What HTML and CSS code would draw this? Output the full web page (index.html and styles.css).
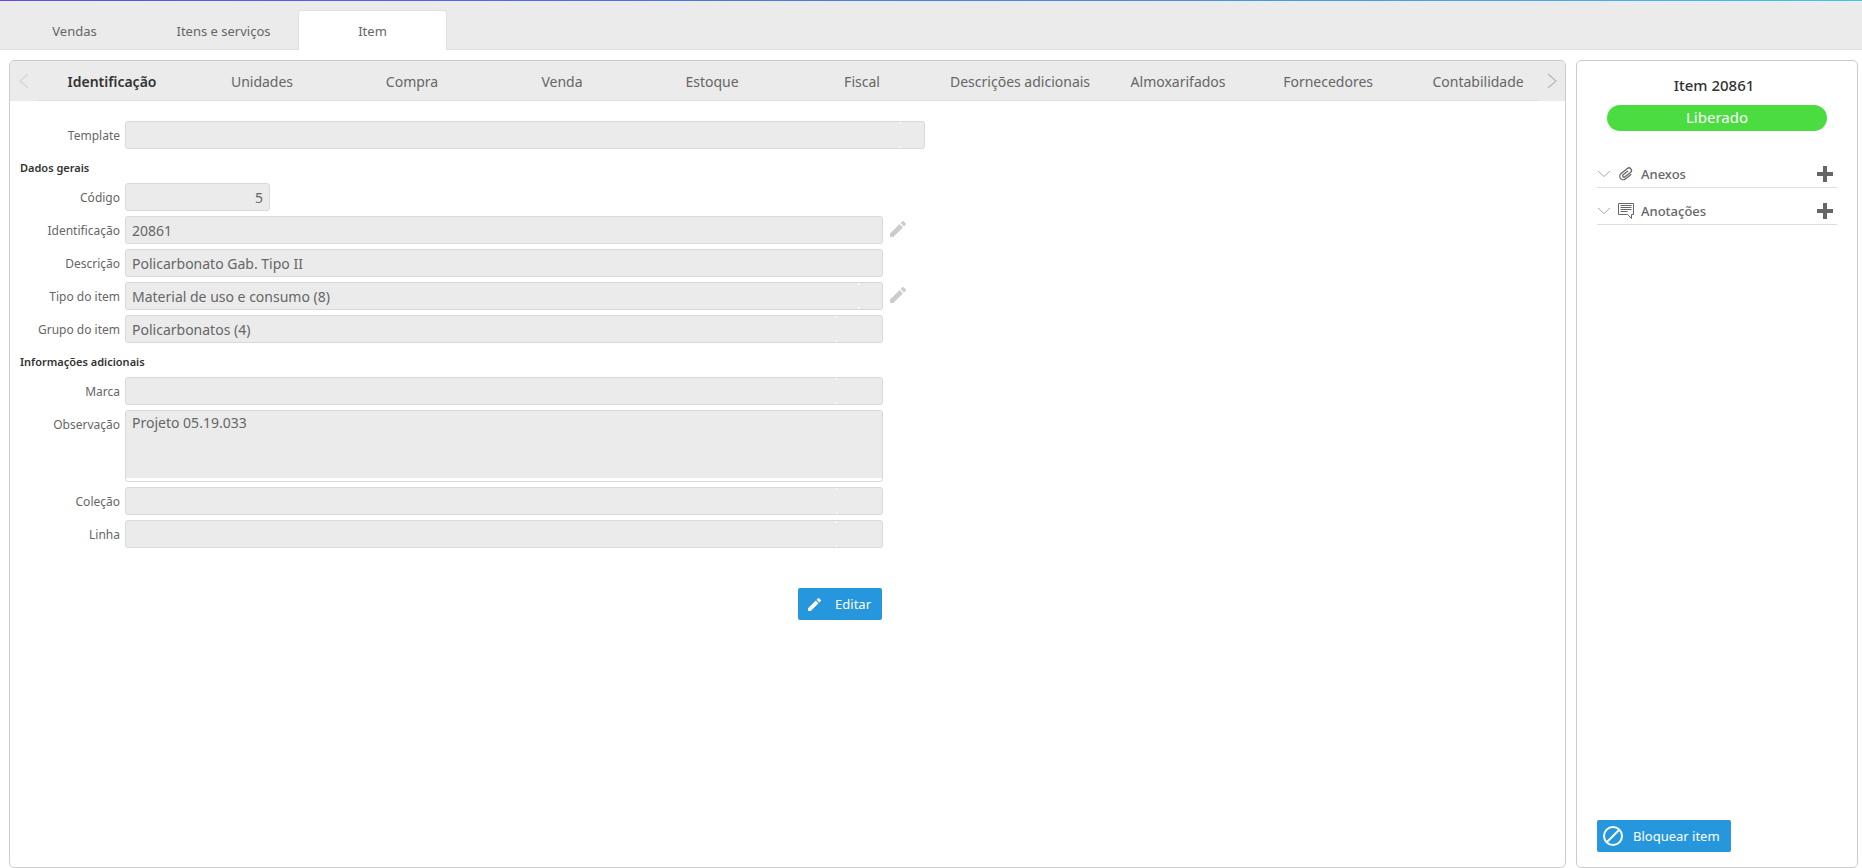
FILE: index.html
```html
<!DOCTYPE html>
<html lang="pt-BR">
<head>
<meta charset="utf-8">
<title>Item 20861</title>
<link rel="stylesheet" href="styles.css">
</head>
<body>
<svg class="symbols" aria-hidden="true">
  <symbol id="pencil" viewBox="0 0 18 18"><path d="M0 14.2V18h3.8L14.6 7.2l-3.800-3.800zM17.700 4.100a1 1 0 0 0 0-1.400L15.300.3a1 1 0 0 0-1.400 0L11.900 2.300l3.800 3.800z"/></symbol>
  <symbol id="chevron" viewBox="0 0 14 8"><path d="M1 1l6 5.500L13 1" fill="none" stroke="currentColor"/></symbol>
  <symbol id="plus" viewBox="0 0 16 16"><path d="M6 0h4v6h6v4h-6v6H6v-6H0V6h6z"/></symbol>
</svg>
<header class="topbar">
  <nav class="pages">
    <button class="page">Vendas</button>
    <button class="page">Itens e serviços</button>
    <button class="page page-active">Item</button>
  </nav>
</header>
<div class="workspace">
  <main class="panel main-panel">
    <div class="sections">
      <button class="arrow arrow-off" aria-label="Anterior"><svg class="line" width="10" height="16" viewBox="0 0 10 16"><path d="M9 1L1 8l8 7"/></svg></button>
      <nav class="section-list">
        <button class="section section-active">Identificação</button>
        <button class="section">Unidades</button>
        <button class="section">Compra</button>
        <button class="section">Venda</button>
        <button class="section">Estoque</button>
        <button class="section">Fiscal</button>
        <button class="section">Descrições adicionais</button>
        <button class="section">Almoxarifados</button>
        <button class="section">Fornecedores</button>
        <button class="section">Contabilidade</button>
      </nav>
      <button class="arrow" aria-label="Próximo"><svg class="line" width="10" height="16" viewBox="0 0 10 16"><path d="M1 1l8 7-8 7"/></svg></button>
    </div>
    <form class="form">
      <div class="row"><label class="label" for="template">Template</label><input class="field field-full split" id="template" readonly></div>
      <h2 class="heading">Dados gerais</h2>
      <div class="row"><label class="label" for="codigo">Código</label><input class="field field-short" id="codigo" value="5" readonly></div>
      <div class="row"><label class="label" for="ident">Identificação</label><input class="field" id="ident" value="20861" readonly><button type="button" class="edit" aria-label="Editar identificação"><svg width="16" height="16"><use href="#pencil"/></svg></button></div>
      <div class="row"><label class="label" for="descricao">Descrição</label><input class="field" id="descricao" value="Policarbonato Gab. Tipo II" readonly></div>
      <div class="row"><label class="label" for="tipo">Tipo do item</label><input class="field split" id="tipo" value="Material de uso e consumo (8)" readonly><button type="button" class="edit" aria-label="Editar tipo do item"><svg width="16" height="16"><use href="#pencil"/></svg></button></div>
      <div class="row"><label class="label" for="grupo">Grupo do item</label><input class="field split split-wide" id="grupo" value="Policarbonatos (4)" readonly></div>
      <h2 class="heading">Informações adicionais</h2>
      <div class="row"><label class="label" for="marca">Marca</label><input class="field split split-wide" id="marca" readonly></div>
      <div class="row"><label class="label" for="obs">Observação</label><textarea class="field notes" id="obs" readonly>Projeto 05.19.033</textarea></div>
      <div class="row"><label class="label" for="colecao">Coleção</label><input class="field split split-wide" id="colecao" readonly></div>
      <div class="row"><label class="label" for="linha">Linha</label><input class="field split split-wide" id="linha" readonly></div>
      <div class="actions"><button type="button" class="action"><svg width="13" height="13"><use href="#pencil"/></svg>Editar</button></div>
    </form>
  </main>
  <aside class="panel side-panel">
    <h1 class="title">Item 20861</h1>
    <div class="status">Liberado</div>
    <div class="group">
      <button class="group-name"><svg class="chevron" width="14" height="8"><use href="#chevron"/></svg><svg class="line" width="16" height="16" viewBox="0 0 16 16"><path transform="rotate(52 8 8)" stroke-width="1.300" stroke-linecap="round" d="M11.500 4.500v7a3.500 3.500 0 0 1-7 0V3.500a2.500 2.500 0 0 1 5 0v7.300a1.300 1.300 0 0 1-2.600 0V5"/></svg>Anexos</button>
      <button class="add" aria-label="Adicionar anexo"><svg width="16" height="16"><use href="#plus"/></svg></button>
    </div>
    <div class="group">
      <button class="group-name"><svg class="chevron" width="14" height="8"><use href="#chevron"/></svg><svg class="line" width="16" height="16" viewBox="0 0 16 16"><path d="M.5.500h15v11h-2v4l-4-4h-9zM2.500 2.500h11M2.500 4.500h11M2.500 6.500h11M2.500 8.500h7"/></svg>Anotações</button>
      <button class="add" aria-label="Adicionar anotação"><svg width="16" height="16"><use href="#plus"/></svg></button>
    </div>
    <button class="action block"><svg class="line" width="20" height="20" viewBox="0 0 20 20"><g stroke-width="2"><circle cx="10" cy="10" r="9"/><path d="M4 16L16 4"/></g></svg>Bloquear item</button>
  </aside>
</div>
</body>
</html>
```
FILE: styles.css
```css
* { box-sizing: border-box; }
body {
  margin: 0;
  min-height: 100vh;
  display: flex;
  flex-direction: column;
  background: #fff;
  color: #666;
  font: 13px/20px "Noto Sans", "Open Sans", sans-serif;
}
button, input, textarea { font: inherit; color: inherit; }
button { border: 0; padding: 0; background: none; cursor: pointer; }
svg { display: block; flex: none; fill: currentColor; }
.line { fill: none; stroke: currentColor; }
.symbols { width: 0; height: 0; position: absolute; }

.topbar {
  height: 50px;
  padding-top: 10px;
  background: linear-gradient(90deg, #5b52dd, #4a7fe6 50%, #3fc3ee) top / 100% 1px no-repeat #ebebeb;
  border-bottom: 1px solid #e0e0e0;
}
.pages { display: flex; height: 40px; }
.page {
  width: 149px;
  border: 1px solid transparent;
  border-bottom: 0;
  border-radius: 3px 3px 0 0;
}
.page-active { background: #fff; border-color: #e0e0e0; }

.workspace { flex: 1; display: flex; gap: 10px; padding: 10px 4px 0 9px; }
.panel { border: 1px solid #ccc; border-radius: 5px; }
.main-panel { flex: 1; min-width: 0; overflow: hidden; }
.side-panel {
  width: 282px;
  flex: none;
  display: flex;
  flex-direction: column;
  padding: 14px 20px 15px;
}

.sections { display: flex; height: 40px; background: #ebebeb; }
.arrow { width: 27px; display: flex; align-items: center; justify-content: center; color: #bbb; flex: none; }
.arrow-off { color: #d6d6d6; }
.arrow svg { stroke-width: 1.500; }
.section-list { flex: 1; display: flex; border-bottom: 1px solid #e0e0e0; min-width: 0; overflow: hidden; }
.section { flex: none; min-width: 150px; padding: 2px 13px 0; font-size: 14px; white-space: nowrap; }
.section-active { color: #333; font-weight: 600; }

.form { display: flex; flex-direction: column; gap: 5px; padding: 20px 9px; }
.row { display: flex; align-items: flex-start; gap: 5px; }
.label { width: 101px; padding-top: 5px; text-align: right; font-size: 12px; flex: none; }
.field {
  display: block;
  width: 758px;
  height: 28px;
  margin: 0;
  padding: 0 6px;
  border: 1px solid #d9d9d9;
  border-radius: 3px;
  background: #ebebeb;
  font-size: 14px;
  outline: 0;
}
.field-full { width: 800px; }
.field-short { width: 145px; text-align: right; }
.split {
  --mark: 23px;
  background:
    linear-gradient(#fff, #fff) right var(--mark) top / 1px 2px no-repeat,
    linear-gradient(#fff, #fff) right var(--mark) bottom / 1px 2px no-repeat,
    #ebebeb;
}
.split-wide { --mark: 45px; }
.notes {
  height: 72px;
  padding-top: 2px;
  line-height: 20px;
  resize: none;
  background: linear-gradient(#ebebeb, #ebebeb) top / 100% 67px no-repeat #fff;
}
.edit { padding: 5px 2px; color: #ccc; }
.heading { margin: 0; height: 24px; padding-left: 1px; line-height: 28px; font-size: 11px; font-weight: 600; color: #333; }

.actions { width: 863px; padding-top: 35px; display: flex; justify-content: flex-end; }
.action {
  display: flex;
  align-items: center;
  gap: 14px;
  height: 32px;
  padding: 0 11px 0 10px;
  border-radius: 2px;
  background: #2697dc;
  color: #fff;
}
.title { margin: 0; padding-right: 6px; text-align: center; font-size: 15px; font-weight: 500; color: #333; }
.status {
  margin: 10px 10px 20px;
  padding-bottom: 2px;
  border-radius: 13px;
  background: #4adc40;
  color: #fff;
  text-align: center;
  font-size: 15px;
  line-height: 24px;
}
.group {
  display: flex;
  justify-content: space-between;
  align-items: center;
  height: 37px;
  padding: 10px 4px 0 0;
  border-bottom: 1px solid #ddd;
}
.group-name { display: flex; align-items: center; gap: 7px; font-size: 13px; font-weight: 500; }
.chevron { color: #aaa; }
.block { margin-top: auto; align-self: flex-start; gap: 10px; padding: 0 11px 0 6px; }
```
